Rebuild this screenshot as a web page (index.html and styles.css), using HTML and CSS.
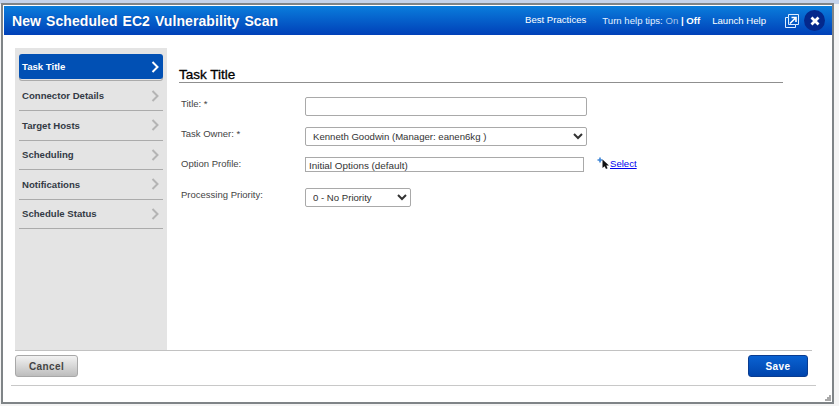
FILE: index.html
```html
<!DOCTYPE html>
<html lang="en">
<head>
<meta charset="utf-8">
<title>New Scheduled EC2 Vulnerability Scan</title>
<link rel="stylesheet" href="styles.css">
</head>
<body>
<div class="window">
  <header class="head">
    <h1 class="head-title">New Scheduled EC2 Vulnerability Scan</h1>
    <nav class="head-links">
      <a class="best">Best Practices</a>
      <span class="tips">Turn help tips: <span class="on">On</span> <b>| Off</b></span>
      <a class="launch">Launch Help</a>
      <svg class="popout" width="14" height="14" viewBox="0 0 14 14"><path d="M3.5 .5H13.5V10.5H10.5V13.5H.5V3.5H3.5Z" fill="none" stroke="#dfeeff"/><path d="M3.5 3.5V10.5H10.5" fill="none" stroke="#dfeeff"/><path d="M5 9.5L10 4.5M6.5 3.5H11V8" fill="none" stroke="#fff" stroke-width="1.6"/></svg>
      <span class="close"><svg width="10" height="10" viewBox="0 0 10 10"><path d="M1.5 1.5L8.5 8.5M8.5 1.5L1.5 8.5" stroke="#fff" stroke-width="2.8"/></svg></span>
    </nav>
  </header>
  <div class="body">
    <div class="main">
      <aside class="side">
        <a class="step active"><span>Task Title</span><svg width="8" height="12" viewBox="0 0 8 12"><path d="M1.5 1L6.5 6L1.5 11" fill="none" stroke="#fff" stroke-width="2"/></svg></a>
        <a class="step"><span>Connector Details</span><svg width="8" height="12" viewBox="0 0 8 12"><path d="M1.5 1L6.5 6L1.5 11" fill="none" stroke="#b4b4b4" stroke-width="2"/></svg></a>
        <a class="step"><span>Target Hosts</span><svg width="8" height="12" viewBox="0 0 8 12"><path d="M1.5 1L6.5 6L1.5 11" fill="none" stroke="#b4b4b4" stroke-width="2"/></svg></a>
        <a class="step"><span>Scheduling</span><svg width="8" height="12" viewBox="0 0 8 12"><path d="M1.5 1L6.5 6L1.5 11" fill="none" stroke="#b4b4b4" stroke-width="2"/></svg></a>
        <a class="step"><span>Notifications</span><svg width="8" height="12" viewBox="0 0 8 12"><path d="M1.5 1L6.5 6L1.5 11" fill="none" stroke="#b4b4b4" stroke-width="2"/></svg></a>
        <a class="step"><span>Schedule Status</span><svg width="8" height="12" viewBox="0 0 8 12"><path d="M1.5 1L6.5 6L1.5 11" fill="none" stroke="#b4b4b4" stroke-width="2"/></svg></a>
      </aside>
      <section class="content">
        <h2 class="sec-title">Task Title</h2>
        <div class="row row-title">
          <label class="lab">Title: *</label>
          <input class="field wide" type="text">
        </div>
        <div class="row row-owner">
          <label class="lab">Task Owner: *</label>
          <select class="field wide"><option>Kenneth Goodwin (Manager: eanen6kg )</option></select>
        </div>
        <div class="row row-option">
          <label class="lab">Option Profile:</label>
          <input class="profile" type="text" value="Initial Options (default)">
          <span class="pick">
            <svg width="14" height="12" viewBox="0 0 14 12"><path d="M3 .5V5.5M.5 3H5.5" stroke="#3f86d6" stroke-width="1.6"/><path d="M5.5 2.5V11L7.6 9.2L9 12L10.6 11.2L9.3 8.6H12Z" fill="#111"/></svg>
            <a class="link">Select</a>
          </span>
        </div>
        <div class="row row-priority">
          <label class="lab">Processing Priority:</label>
          <select class="field narrow"><option>0 - No Priority</option></select>
        </div>
      </section>
    </div>
    <footer class="foot">
      <button class="btn cancel">Cancel</button>
      <button class="btn save">Save</button>
    </footer>
    <div class="base"></div>
    <svg class="grip" width="6" height="6" viewBox="0 0 6 6"><path d="M4 0h2v2H4zM2 2h2v2H2zM4 2h2v2H4zM0 4h2v2H0zM2 4h2v2H2zM4 4h2v2H4z" fill="#a9a9a9"/></svg>
  </div>
</div>
</body>
</html>
```
FILE: styles.css
```css
* { box-sizing: border-box; }
html, body { margin: 0; height: 100%; }
body {
  width: 839px;
  height: 406px;
  overflow: hidden;
  background: linear-gradient(#c5d3ea 0, #c5d3ea 4px, #f4f4f4 4px);
  font-family: "Liberation Sans", Arial, sans-serif;
  padding: 3px 0 0 1px;
}
.window {
  width: 833px;
  height: 401px;
  border: 2px solid #7f8487;
  background: #fff;
  display: flex;
  flex-direction: column;
}
.head {
  height: 29px;
  margin: 1px 0 0 1px;
  flex: none;
  background: linear-gradient(#0a7ddc, #0040b8);
  display: flex;
  align-items: center;
  justify-content: space-between;
  color: #fff;
}
.head-title {
  margin: 0 0 0 8px;
  font-size: 14px;
  font-weight: 700;
  letter-spacing: .08px;
  word-spacing: 1px;
  text-shadow: 0 0 1px #0a3f9a;
}
.head-links {
  display: flex;
  align-items: center;
  font-size: 9.6px;
  margin-right: 7px;
}
.best { margin-right: 16px; position: relative; top: -1px; }
.tips { margin-right: 12px; color: #e3f0ff; }
.on { color: #a9c6ea; }
.tips b { font-weight: 700; color: #fff; }
.launch { margin-right: 19px; }
.popout { margin-right: 5px; }
.close {
  width: 21px;
  height: 21px;
  border-radius: 50%;
  background: #04288c;
  display: flex;
  align-items: center;
  justify-content: center;
}
.body {
  flex: 1;
  position: relative;
  display: flex;
  flex-direction: column;
  padding: 13px 0 0 12px;
  min-height: 0;
}
.main {
  display: flex;
  width: 797px;
  height: 303px;
  border-bottom: 1px solid #c2c2c2;
  flex: none;
}
.side {
  width: 152px;
  background: #e4e4e4;
  padding: 6px 4px 0;
  flex: none;
}
.step {
  height: 29.5px;
  display: flex;
  align-items: center;
  justify-content: space-between;
  padding: 0 3px;
  border-bottom: 1px solid #ababab;
  font-size: 9.6px;
  font-weight: 700;
  color: #333a44;
}
.step.active {
  height: 25px;
  margin-bottom: 2.5px;
  border: 0;
  border-radius: 3px;
  background: #0150b4;
  color: #fff;
  box-shadow: 0 2px 0 -1px #e4e4e4, 0 2px 0 #ababab;
}
.step svg { margin-right: 1px; }
.content {
  flex: 1;
  padding: 19px 0 0 12px;
  min-width: 0;
}
.sec-title {
  margin: 0;
  width: 604px;
  height: 16px;
  border-bottom: 1px solid #8f8f8f;
  font-size: 13.5px;
  line-height: 16px;
  font-weight: 400;
  color: #000;
  -webkit-text-stroke: .3px #000;
}
.row { display: flex; align-items: flex-start; }
.lab {
  width: 124px;
  margin-left: 2px;
  flex: none;
  font-size: 9.5px;
  color: #444;
}
.row-title { margin-top: 14px; height: 30px; }
.row-title .lab { padding-top: 1px; }
.row-owner { height: 30px; }
.row-owner .lab { padding-top: 1px; }
.row-option { height: 31px; }
.row-option .lab { padding-top: 1px; }
.row-priority { height: 30px; }
.row-priority .lab { padding-top: 1px; }
.field {
  height: 19px;
  border: 1px solid #a9a9a9;
  border-radius: 2px;
  background: #fff;
  font: 9.6px "Liberation Sans", Arial, sans-serif;
  color: #333;
  padding: 0 0 0 3px;
}
.wide { width: 282px; }
.narrow { width: 106px; }
.profile {
  width: 279px;
  height: 15px;
  border: 1px solid #a9a9a9;
  padding: 1px 3px 0;
  font: 9.9px "Liberation Sans", Arial, sans-serif;
  color: #333;
}
.pick {
  display: flex;
  align-items: flex-start;
  margin-left: 13px;
  font-size: 9.6px;
}
.pick svg { margin-right: -1px; }
.link { color: #0000ee; text-decoration: underline; padding-top: 1px; }
.foot {
  display: flex;
  justify-content: space-between;
  width: 793px;
  padding-top: 4px;
  flex: none;
}
.btn {
  width: 63px;
  height: 22px;
  border-radius: 3px;
  font: 700 10px "Liberation Sans", Arial, sans-serif;
  letter-spacing: .4px;
  padding: 0;
}
.cancel {
  background: linear-gradient(#f2f2f2, #bdbdbd);
  border: 1px solid #a8a8a8;
  color: #444;
}
.save {
  width: 60px;
  background: linear-gradient(#0a62d2, #0044ad);
  border: 1px solid #0a3c90;
  color: #fff;
}
.base {
  width: 805px;
  margin: 8px 0 0 -4px;
  border-top: 1px solid #c8c8c8;
  flex: none;
}
.grip { position: absolute; right: 1px; bottom: 1px; }
```
